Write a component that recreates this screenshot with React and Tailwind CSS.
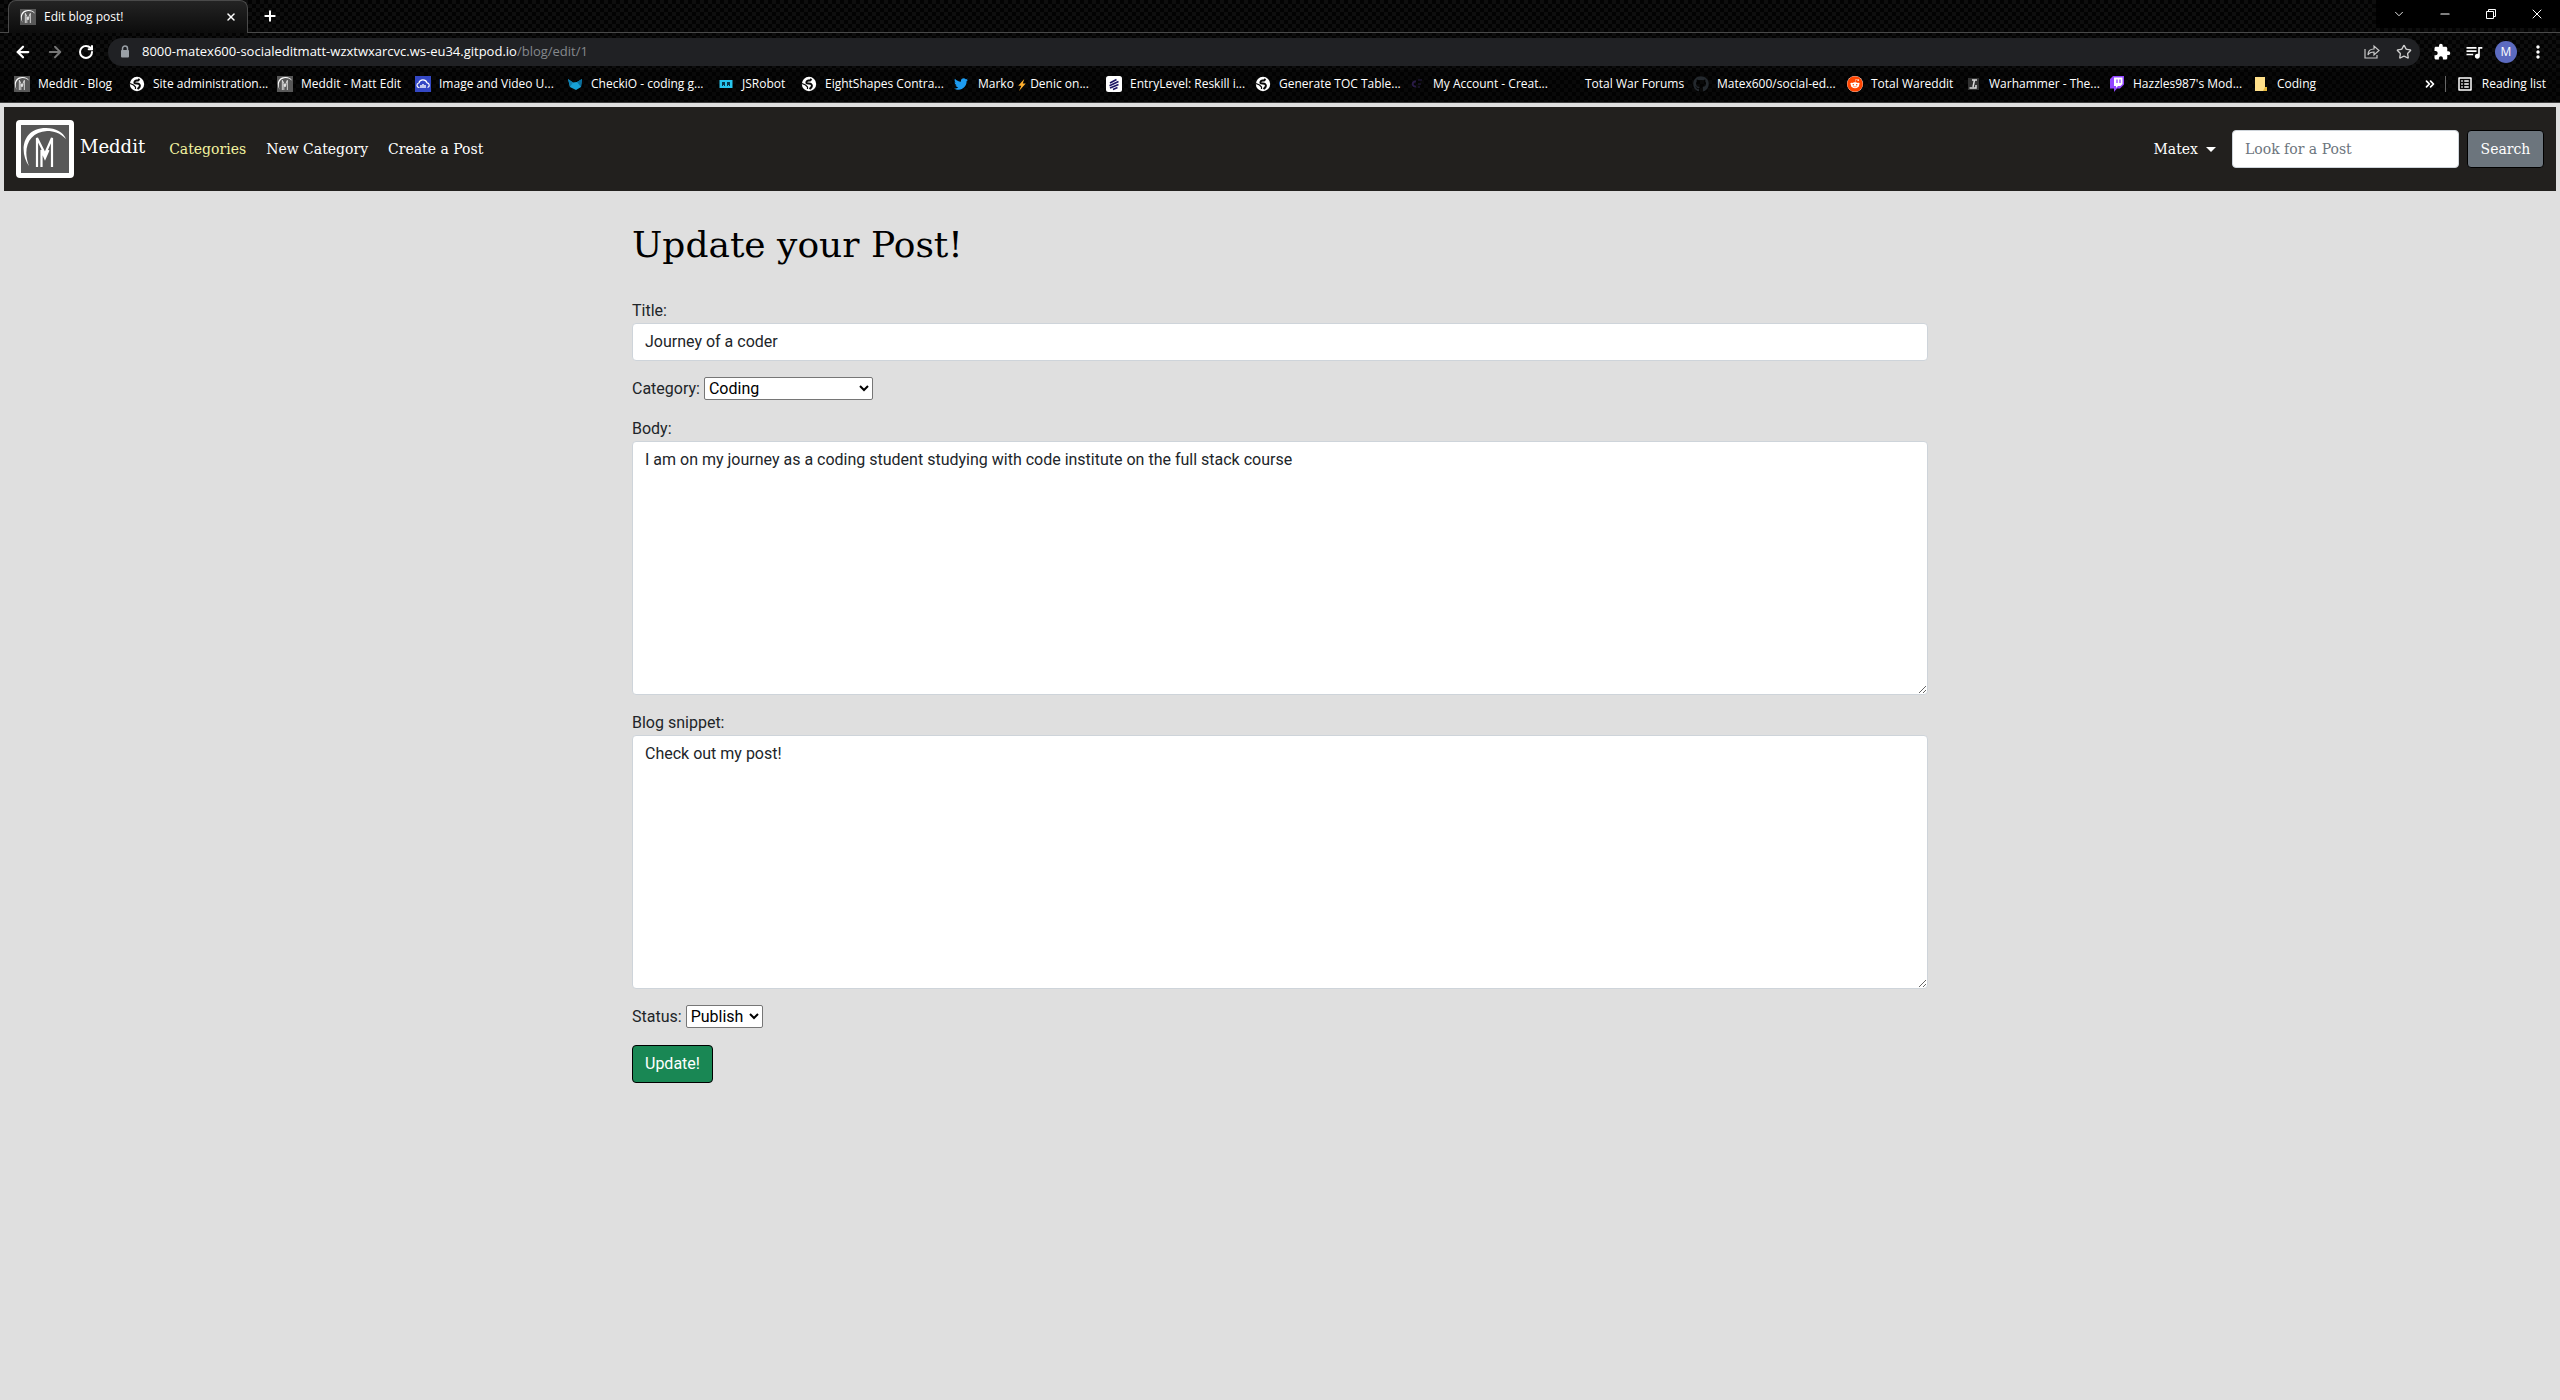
import React from "react";
import {
  ArrowLeft, ArrowRight, RotateCw, X, Plus, Star, ChevronDown, Minus, ChevronsRight,
} from "lucide-react";
import { FaTwitter, FaGithub, FaReddit } from "react-icons/fa";
import { MdMoreVert, MdQueueMusic, MdListAlt, MdExtension } from "react-icons/md";

const slab = "font-['Roboto_Slab','DejaVu_Serif',serif]";

function MedditLogo({ className }) {
  return (
    <svg viewBox="0 0 48 48" className={className} aria-hidden="true">
      <rect width="48" height="48" fill="#585858" />
      <path d="M8 41C-2 27 1 3 25 3C35 3 42 7 45 14C39 8 33 6 26 6C8 7 1 23 8 41Z" fill="#fff" />
      <path d="M16 42V13L24 29L31 13V42M20.500 42V25L24 33L27.500 25" fill="none" stroke="#fff" strokeWidth="2.200" />
    </svg>
  );
}

const icons = {
  meddit: <MedditLogo className="size-4" />,
  globe: (
    <svg viewBox="0 0 16 16" className="size-4" aria-hidden="true">
      <circle cx="8" cy="8" r="7.200" fill="#fff" />
      <path d="M10.500 3L9 4.500H7.500C6 5 5 5.500 5.500 7C6 8 9 7 10 8C12 9.500 10.500 11.500 8.500 13" fill="none" stroke="#0a0a0a" strokeWidth="2" />
      <path d="M1 7.500L4.500 9L6.500 11V13" fill="none" stroke="#0a0a0a" strokeWidth="1.200" />
    </svg>
  ),
  cloud: (
    <svg viewBox="0 0 16 16" className="size-4" aria-hidden="true">
      <rect width="16" height="16" fill="#3448c5" />
      <path d="M4.500 11.500H3.800A2.300 2.300 0 0 1 3.800 7A4.300 4.300 0 0 1 12 6.800A2.400 2.400 0 0 1 12.500 11.500" fill="none" stroke="#fff" strokeWidth="1.200" />
      <path d="M6 9V12M8 8V12M10 9V12" stroke="#fff" strokeWidth="1.400" />
    </svg>
  ),
  checkio: (
    <svg viewBox="0 0 16 16" className="size-4" aria-hidden="true">
      <path d="M1 3L6 6.500L10 6L15 3L14 11L9 14L3 11Z" fill="#17a2d8" />
      <path d="M1 3L6 6.500L3 11Z" fill="#0f7fb0" />
      <path d="M15 3L10 6L14 11Z" fill="#0b6f9d" />
    </svg>
  ),
  robot: (
    <svg viewBox="0 0 16 16" className="size-4" aria-hidden="true">
      <rect x="1.500" y="4" width="13" height="8" fill="#27c5ee" />
      <path d="M4 6H7V10H6V9H5V10H4ZM9 6H12V10H11V9H10V10H9Z" fill="#08364a" />
    </svg>
  ),
  twitter: <FaTwitter className="size-3.5 text-[#1d9bf0]" />,
  entry: (
    <svg viewBox="0 0 16 16" className="size-4" aria-hidden="true">
      <rect width="16" height="16" rx="2.500" fill="#fff" />
      <path d="M4 7L10.500 3.500M3.500 9.800L12.500 5.500M4 12L12.500 8.500M7 13.500L11.500 11.500" stroke="#1b1464" strokeWidth="1.600" />
    </svg>
  ),
  creative: (
    <svg viewBox="0 0 16 16" className="size-4" aria-hidden="true">
      <path d="M7 5.500A2.600 2.600 0 1 0 7 10.500" fill="none" stroke="#2a1b47" strokeWidth="2" />
      <path d="M9 4H13M9 8H12M9 11H11" stroke="#1d1530" strokeWidth="1.500" />
    </svg>
  ),
  blank: <span className="size-4" />,
  github: <FaGithub className="size-4 text-[#24292e]" />,
  reddit: (
    <span className="flex size-4 rounded-full bg-white">
      <FaReddit className="size-4 text-[#ff4500]" />
    </span>
  ),
  warhammer: (
    <svg viewBox="0 0 16 16" className="size-4" aria-hidden="true">
      <rect x="3" y="2" width="11" height="12" fill="#333" />
      <path d="M7 4H12M9.500 4L8 11M4.500 12H11V9" fill="none" stroke="#ddd" strokeWidth="1.500" />
    </svg>
  ),
  twitch: (
    <svg viewBox="0 0 16 16" className="size-4" aria-hidden="true">
      <path d="M1 3L4 0H15V8.500L11 12.500H8L5 16V12.500H1Z" fill="#9146ff" />
      <path d="M5 1.500H13.500V8L11.500 10H9L7 12V10H5Z" fill="#fff" />
      <path d="M8 3.500V7M11 3.500V7" stroke="#9146ff" strokeWidth="1.300" />
    </svg>
  ),
  folder: (
    <svg viewBox="0 0 16 16" className="size-4" aria-hidden="true">
      <path d="M2 1H12V11H14V15H2Z" fill="#ffe08a" />
      <path d="M12 11H14V15H10Z" fill="#e8b93c" />
    </svg>
  ),
};

const bookmarks = [
  ["meddit", "Meddit - Blog", "w-[115px]"],
  ["globe", "Site administration...", "w-[148px]"],
  ["meddit", "Meddit - Matt Edit", "w-[138px]"],
  ["cloud", "Image and Video U...", "w-[152px]"],
  ["checkio", "CheckiO - coding g...", "w-[151px]"],
  ["robot", "JSRobot", "w-[83px]"],
  ["globe", "EightShapes Contra...", "w-[153px]"],
  ["twitter", "Marko ⚡ Denic on...", "w-[152px]"],
  ["entry", "EntryLevel: Reskill i...", "w-[149px]"],
  ["globe", "Generate TOC Table...", "w-[154px]"],
  ["creative", "My Account - Creat...", "w-[152px]"],
  ["blank", "Total War Forums", "w-[132px]"],
  ["github", "Matex600/social-ed...", "w-[154px]"],
  ["reddit", "Total Wareddit", "w-[118px]"],
  ["warhammer", "Warhammer - The...", "w-[144px]"],
  ["twitch", "Hazzles987's Mod...", "w-[144px]"],
  ["folder", "Coding", "w-[80px]"],
];

function BookmarkLabel({ text }) {
  const [before, after] = text.split("⚡");
  if (after === undefined) return <span>{text}</span>;
  return (
    <span>
      {before}
      <svg viewBox="0 0 12 16" className="inline h-3 w-2.5" aria-hidden="true">
        <path d="M9 0L1 9H5L2 16L11 6H7Z" fill="#ffb02e" />
      </svg>
      {after}
    </span>
  );
}

const windowButton = "flex h-7 w-[46px] items-center justify-center";
const toolButton = "flex size-8 items-center justify-center";

function Browser() {
  return (
    <header className="border-b border-[#3c3c3c] bg-[#050505] bg-[repeating-conic-gradient(#0e0e0e_0%_25%,#030303_0%_50%)] bg-[length:8px_8px] font-['Segoe_UI','Open_Sans',sans-serif] text-xs text-white">
      <div className="flex h-[33px] items-end border-b border-[#4a4a4a] pl-2">
        <div className="-mb-px flex h-[33px] w-60 items-center rounded-t-lg border border-b-0 border-[#4a4a4a] bg-gradient-to-b from-[#242424] to-[#0c0c0c] pr-2.5 pl-[11px]">
          <MedditLogo className="size-4" />
          <span className="ml-2 flex-1">Edit blog post!</span>
          <button aria-label="Close tab"><X className="size-3" strokeWidth={3} /></button>
        </div>
        <button aria-label="New tab" className="mb-2 ml-3.5"><Plus className="size-4" strokeWidth={3} /></button>
        <div className="ml-auto flex h-full items-start">
          <button aria-label="Search tabs" className={`bg-black ${windowButton}`}><ChevronDown className="size-3.5" strokeWidth={1.5} /></button>
          <button aria-label="Minimize" className={`bg-black ${windowButton}`}><Minus className="size-3.5" strokeWidth={2} /></button>
          <button aria-label="Restore" className={`bg-black ${windowButton}`}>
            <svg viewBox="0 0 12 12" className="size-3" fill="none" stroke="#fff"><path d="M1.500 3.500h7v7h-7zM3.500 3.500v-2h7v7h-2" /></svg>
          </button>
          <button aria-label="Close" className={`bg-black ${windowButton}`}><X className="size-4" strokeWidth={1.5} /></button>
        </div>
      </div>
      <div className="flex h-[37px] items-center pr-1.5 pl-3.5">
        <button aria-label="Back"><ArrowLeft className="size-[18px]" strokeWidth={3} /></button>
        <button aria-label="Forward" className="ml-3.5"><ArrowRight className="size-[18px] text-[#777]" strokeWidth={2.5} /></button>
        <button aria-label="Reload" className="ml-3.5"><RotateCw className="size-4" strokeWidth={3} /></button>
        <div className="ml-3.5 flex h-7 flex-1 items-center rounded-full bg-[#202124] pl-3">
          <svg viewBox="0 0 10 14" className="h-3.5 w-2.5" aria-hidden="true">
            <path d="M2.500 6V3.500a2.500 2.500 0 0 1 5 0V6" fill="none" stroke="#9aa0a6" strokeWidth="1.500" />
            <rect x="1" y="5" width="8" height="7.500" rx="1" fill="#9aa0a6" />
          </svg>
          <span className="ml-3 flex-1 text-[13px]">8000-matex600-socialeditmatt-wzxtwxarcvc.ws-eu34.gitpod.io<span className="text-[#85888c]">/blog/edit/1</span></span>
          <button aria-label="Share" className={toolButton}>
            <svg viewBox="0 0 16 16" className="size-4" fill="none" stroke="#c8c8c8" strokeWidth="1.200"><path d="M1 5v9h12v-3M4 11c0-4 2-6 6-6V2l5 4.500L10 11V8c-3 0-5 1-6 3z" /></svg>
          </button>
          <button aria-label="Bookmark this tab" className={toolButton}><Star className="size-4 text-[#d0d0d0]" strokeWidth={2} /></button>
        </div>
        <div className="ml-1.5 flex items-center">
          <button aria-label="Extensions" className={toolButton}><MdExtension className="size-[18px]" /></button>
          <button aria-label="Media" className={toolButton}><MdQueueMusic className="size-5" /></button>
          <button aria-label="Profile" className={toolButton}>
            <span className="flex size-[22px] items-center justify-center rounded-full bg-[#5c6bc0]">M</span>
          </button>
          <button aria-label="Menu" className={toolButton}><MdMoreVert className="size-5" /></button>
        </div>
      </div>
      <div className="flex h-8 items-center overflow-hidden bg-black/30 px-3.5 pb-1 whitespace-nowrap">
        {bookmarks.map(([icon, text, width], i) => (
          <a key={i} href="#" className={`flex shrink-0 items-center gap-2 ${width}`}>
            <span className="flex w-4 shrink-0">{icons[icon]}</span>
            <BookmarkLabel text={text} />
          </a>
        ))}
        <button aria-label="More bookmarks" className="mr-2 ml-auto"><ChevronsRight className="size-3.5" strokeWidth={3} /></button>
        <span className="mr-2.5 h-4 w-px bg-[#666]" />
        <a href="#" className="flex items-center gap-2"><MdListAlt className="size-[18px]" />Reading list</a>
      </div>
    </header>
  );
}

function Navbar() {
  return (
    <nav className={`flex h-[84px] items-center bg-[#22201e] px-3 text-sm text-white ${slab}`}>
      <a href="#" className="flex items-center gap-1.5 text-lg">
        <MedditLogo className="size-[58px] rounded border-[5px] border-white bg-white" />
        <span className="pb-1">Meddit</span>
      </a>
      <div className="ml-6 flex gap-5">
        <a href="#" className="text-[#f3f3a0]">Categories</a>
        <a href="#">New Category</a>
        <a href="#">Create a Post</a>
      </div>
      <button className="ml-auto flex items-center gap-2">
        Matex
        <span className="border-x-[5px] border-t-[5px] border-x-transparent border-t-white" />
      </button>
      <input aria-label="Look for a Post" placeholder="Look for a Post" className="ml-4 h-[38px] w-[227px] rounded border border-[#ced4da] bg-white px-3 text-[#212529] placeholder:text-[#6c757d]" />
      <button className="ml-2 h-[38px] w-[77px] rounded border border-black bg-[#6c757d]">Search</button>
    </nav>
  );
}

const field = "block w-full rounded border border-[#ced4da] bg-white px-3 py-1.5 text-[#212529]";
const select = "h-[23px] rounded-xs border border-[#767676] bg-white text-black";

export default function App() {
  return (
    <div className="min-h-screen bg-[#dfdfdf]">
      <Browser />
      <div className="p-1">
        <Navbar />
        <main className="mx-auto max-w-[1296px] pt-[30px] font-[Roboto,sans-serif] text-base leading-6 text-[#212529]">
          <h1 className={`mb-[30px] text-4xl leading-12 text-black ${slab}`}>Update your Post!</h1>
          <form className="flex flex-col gap-4" onSubmit={(e) => e.preventDefault()}>
            <div>
              <label htmlFor="title" className="block">Title:</label>
              <input id="title" defaultValue="Journey of a coder" className={field} />
            </div>
            <div className="flex h-6 items-start gap-1">
              <label htmlFor="category">Category:</label>
              <select id="category" className={`w-[169px] ${select}`}><option>Coding</option></select>
            </div>
            <div>
              <label htmlFor="body" className="block">Body:</label>
              <textarea id="body" rows={10} defaultValue="I am on my journey as a coding student studying with code institute on the full stack course" className={field} />
            </div>
            <div>
              <label htmlFor="snippet" className="block">Blog snippet:</label>
              <textarea id="snippet" rows={10} defaultValue="Check out my post!" className={field} />
            </div>
            <div className="flex h-6 items-start gap-1">
              <label htmlFor="status">Status:</label>
              <select id="status" className={`w-[77px] ${select}`}><option>Publish</option></select>
            </div>
            <button className="self-start rounded border border-black bg-[#198754] px-3 py-1.5 text-white">Update!</button>
          </form>
        </main>
      </div>
    </div>
  );
}
